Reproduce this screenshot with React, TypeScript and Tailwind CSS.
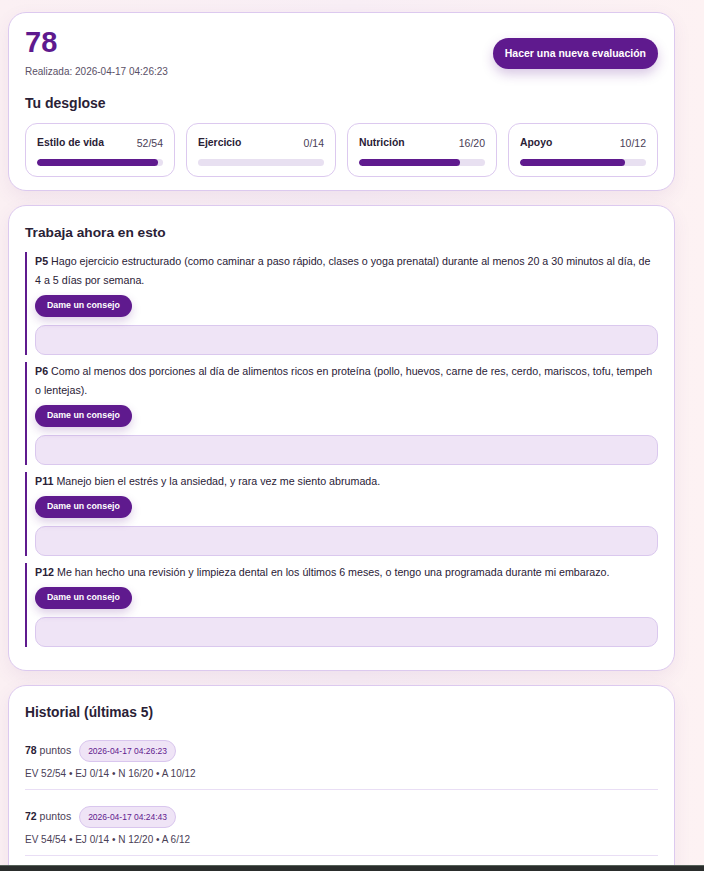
import React from 'react';

const breakdown = [
  { label: 'Estilo de vida', score: 52, max: 54 },
  { label: 'Ejercicio', score: 0, max: 14 },
  { label: 'Nutrición', score: 16, max: 20 },
  { label: 'Apoyo', score: 10, max: 12 },
];

const focus = [
  {
    id: 'P5',
    text: 'Hago ejercicio estructurado (como caminar a paso rápido, clases o yoga prenatal) durante al menos 20 a 30 minutos al día, de 4 a 5 días por semana.',
  },
  {
    id: 'P6',
    text: 'Como al menos dos porciones al día de alimentos ricos en proteína (pollo, huevos, carne de res, cerdo, mariscos, tofu, tempeh o lentejas).',
  },
  { id: 'P11', text: 'Manejo bien el estrés y la ansiedad, y rara vez me siento abrumada.' },
  {
    id: 'P12',
    text: 'Me han hecho una revisión y limpieza dental en los últimos 6 meses, o tengo una programada durante mi embarazo.',
  },
];

const history = [
  { points: 78, date: '2026-04-17 04:26:23', detail: 'EV 52/54 • EJ 0/14 • N 16/20 • A 10/12' },
  { points: 72, date: '2026-04-17 04:24:43', detail: 'EV 54/54 • EJ 0/14 • N 12/20 • A 6/12' },
];

export default function App() {
  return (
    <div
      className="min-h-screen w-full bg-gradient-to-r from-[#fbf0f3] via-[#f8eef5] to-[#fdf2f3] text-[#2a2136] overflow-hidden"
      style={{ fontFamily: '"Liberation Sans", Arial, sans-serif' }}
    >
      <div className="ml-2 w-[667px] pt-3 flex flex-col gap-[14px]">
        {/* ── Score card ── */}
        <section className="rounded-[18px] border border-[#dcc9ef] bg-white px-4 pt-[13px] pb-[13px] shadow-[0_6px_18px_rgba(120,60,140,0.08)]">
          <div className="flex items-start justify-between">
            <div>
              <div className="text-[29px] leading-[32px] font-bold text-[#5e1a8e]">78</div>
              <div className="mt-[6px] text-[10px] leading-[15px] text-[#5a5066]">Realizada: 2026-04-17 04:26:23</div>
            </div>
            <button className="mt-[12px] h-[31px] px-3 rounded-full bg-[#5f1a8e] text-white text-[10.5px] font-bold shadow-[0_5px_12px_rgba(95,26,142,0.25)]">
              Hacer una nueva evaluación
            </button>
          </div>
          <h2 className="mt-[14px] text-[14px] font-bold">Tu desglose</h2>
          <div className="mt-[9px] grid grid-cols-4 gap-[11px]">
            {breakdown.map((b) => (
              <div key={b.label} className="rounded-[12px] border border-[#dcc9ef] px-[11px] pt-[11px] pb-[10px]">
                <div className="flex items-center justify-between">
                  <span className="text-[10.4px] leading-[16px] font-bold">{b.label}</span>
                  <span className="text-[10.5px] leading-[16px] text-[#4a4056]">
                    {b.score}/{b.max}
                  </span>
                </div>
                <div className="mt-[8px] h-[7px] rounded-full bg-[#e8e0f1] overflow-hidden">
                  <div
                    className="h-full rounded-full bg-[#5f1a8e]"
                    style={{ width: `${(b.score / b.max) * 100}%` }}
                  />
                </div>
              </div>
            ))}
          </div>
        </section>

        {/* ── Focus card ── */}
        <section className="rounded-[18px] border border-[#dcc9ef] bg-white px-4 pt-[17px] pb-[23px] shadow-[0_6px_18px_rgba(120,60,140,0.08)]">
          <h2 className="text-[13.7px] font-bold">Trabaja ahora en esto</h2>
          <div className="mt-[8px] flex flex-col gap-[7px]">
            {focus.map((f) => (
              <div key={f.id} className="border-l-2 border-[#5f1a8e] pl-[8px]">
                <p className="text-[10.7px] leading-[19px]">
                  <span className="font-bold">{f.id}</span> {f.text}
                </p>
                <button className="mt-[5px] h-[22px] px-3 rounded-full bg-[#5f1a8e] text-white text-[8.8px] font-bold shadow-[0_4px_10px_rgba(95,26,142,0.22)]">
                  Dame un consejo
                </button>
                <div className="mt-[8px] h-[30px] rounded-[10px] border border-[#dac8ee] bg-[#efe4f6]" />
              </div>
            ))}
          </div>
        </section>

        {/* ── History card ── */}
        <section className="rounded-[18px] border border-[#dcc9ef] bg-white px-4 pt-[17px] pb-4 shadow-[0_6px_18px_rgba(120,60,140,0.08)]">
          <h2 className="text-[13.8px] font-bold">Historial (últimas 5)</h2>
          <div className="mt-[17px] flex flex-col">
            {history.map((h) => (
              <div key={h.date} className="border-b border-[#e9def5] pb-[8px] mb-[16px]">
                <div className="flex items-center gap-[8px]">
                  <span className="text-[10.5px]">
                    <span className="font-bold">{h.points}</span> <span className="text-[#4a4056]">puntos</span>
                  </span>
                  <span className="h-[22px] px-[8px] flex items-center rounded-full border border-[#d9c6ee] bg-[#efe4f6] text-[8.5px] text-[#5f1a8e]">
                    {h.date}
                  </span>
                </div>
                <div className="mt-[4px] text-[10px] leading-[15px] text-[#4a4056]">{h.detail}</div>
              </div>
            ))}
          </div>
        </section>
      </div>
      <div className="fixed bottom-0 left-0 w-full h-[6px] bg-[#2a2d2c] border-t border-[#556058]" />
    </div>
  );
}
